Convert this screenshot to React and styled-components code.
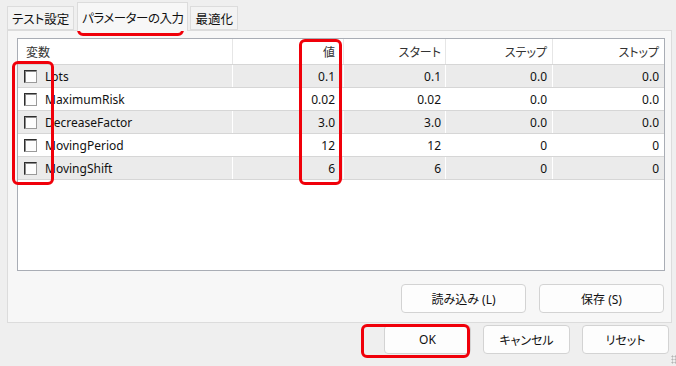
import React from 'react';
import styled, { createGlobalStyle } from 'styled-components';

const GlobalStyle = createGlobalStyle`
  html, body {
    margin: 0;
    padding: 0;
    background: #efefef;
  }
  body {
    font-family: "Noto Sans", "Noto Sans CJK JP", sans-serif;
    font-size: 12px;
    color: #111;
    font-feature-settings: "palt";
  }
`;

const Window = styled.div`
  position: relative;
  width: 676px;
  height: 366px;
  background: #efefef;
  overflow: hidden;
`;

const TabBar = styled.div`
  display: flex;
  align-items: flex-end;
  height: 30px;
  padding-left: 7px;
`;

const Tab = styled.div`
  display: flex;
  align-items: center;
  height: ${p => (p.active ? '28px' : '22px')};
  padding: 0 ${p => (p.active ? '4px' : '4px')};
  margin-right: ${p => (p.active ? '2px' : '3px')};
  margin-bottom: ${p => (p.active ? '-1px' : '0')};
  background: ${p => (p.active ? '#f7f7f7' : '#f3f3f3')};
  border: 1px solid #dcdcdc;
  border-bottom: ${p => (p.active ? 'none' : '1px solid #dcdcdc')};
  font-family: "Noto Sans CJK JP", sans-serif;
  font-size: 12.5px;
  letter-spacing: ${p => (p.active ? '-0.5px' : '0')};
  color: #111;
  z-index: ${p => (p.active ? 1 : 0)};
`;

const Panel = styled.div`
  display: flex;
  flex-direction: column;
  width: 665px;
  height: 293px;
  margin-left: 7px;
  box-sizing: border-box;
  background: #f7f7f7;
  border: 1px solid #dcdcdc;
  padding: 7px 7px 0 9px;
`;

const Table = styled.div`
  width: 648px;
  height: 233px;
  box-sizing: border-box;
  background: #fff;
  border: 1px solid #a9adb5;
`;

const Row = styled.div`
  display: grid;
  grid-template-columns: 215px 111px 102px 107px 111px;
  height: ${p => (p.header ? '25px' : '22px')};
  background: ${p => (p.shaded ? '#ebebeb' : '#fff')};
  border-bottom: 1px solid #d6d6d6;
`;

const Cell = styled.div`
  display: flex;
  align-items: center;
  justify-content: ${p => (p.left ? 'flex-start' : 'flex-end')};
  padding: ${p => (p.left ? '0 0 0 5px' : `0 ${p.pr || 5}px 0 0`)};
  border-right: 1px solid ${p => (p.header ? '#e6e6e6' : '#ffffff')};
  white-space: nowrap;
  color: #111;
  font-size: 12px;
  &:last-child {
    border-right: none;
  }
`;

const HeadText = styled.span`
  font-family: "Noto Sans CJK JP", sans-serif;
  font-size: 12px;
  color: #333;
  padding-left: ${p => (p.pl || 0)}px;
`;

const Check = styled.span`
  display: inline-block;
  width: 13px;
  height: 13px;
  box-sizing: border-box;
  margin: 0 8px 0 1px;
  background: #fdfdfd;
  border: 1px solid;
  border-color: #2e2e2e #9a9a9a #9a9a9a #2e2e2e;
  box-shadow: inset 1px 1px 0 #8a8a8a;
`;

const ButtonRow = styled.div`
  display: flex;
  justify-content: flex-end;
  gap: 13px;
  margin-top: 13px;
`;

const Button = styled.button`
  width: ${p => p.w || 87}px;
  height: 29px;
  box-sizing: border-box;
  background: #fdfdfd;
  border: 1px solid #d3d3d3;
  border-radius: 4px;
  font-family: "Noto Sans", "Noto Sans CJK JP", sans-serif;
  font-feature-settings: "palt";
  font-size: 12px;
  color: #111;
  padding: 0;
`;

const Footer = styled.div`
  display: flex;
  justify-content: flex-end;
  gap: 12px;
  padding: 2px 7px 0 0;
`;

const Mark = styled.div`
  position: absolute;
  box-sizing: border-box;
  border: 3px solid #f0000a;
  border-radius: 6px;
  pointer-events: none;
`;

const Grip = styled.div`
  position: absolute;
  right: 0;
  bottom: 2px;
  width: 5px;
  height: 9px;
  background-image: radial-gradient(#b5b5b5 45%, transparent 50%);
  background-size: 3px 3px;
`;

const params = [
  { name: 'Lots', value: '0.1', start: '0.1', step: '0.0', stop: '0.0' },
  { name: 'MaximumRisk', value: '0.02', start: '0.02', step: '0.0', stop: '0.0' },
  { name: 'DecreaseFactor', value: '3.0', start: '3.0', step: '0.0', stop: '0.0' },
  { name: 'MovingPeriod', value: '12', start: '12', step: '0', stop: '0' },
  { name: 'MovingShift', value: '6', start: '6', step: '0', stop: '0' },
];

export default function App() {
  return (
    <Window>
      <GlobalStyle />
      <TabBar>
        <Tab>テスト設定</Tab>
        <Tab active>パラメーターの入力</Tab>
        <Tab>最適化</Tab>
      </TabBar>
      <Panel>
        <Table>
          <Row header>
            <Cell left header><HeadText pl={3}>変数</HeadText></Cell>
            <Cell header pr={8}><HeadText>値</HeadText></Cell>
            <Cell header pr={4}><HeadText>スタート</HeadText></Cell>
            <Cell header><HeadText>ステップ</HeadText></Cell>
            <Cell header><HeadText>ストップ</HeadText></Cell>
          </Row>
          {params.map((p, i) => (
            <Row key={p.name} shaded={i % 2 === 0}>
              <Cell left><Check />{p.name}</Cell>
              <Cell pr={8}>{p.value}</Cell>
              <Cell pr={4}>{p.start}</Cell>
              <Cell>{p.step}</Cell>
              <Cell>{p.stop}</Cell>
            </Row>
          ))}
        </Table>
        <ButtonRow>
          <Button w={125}>読み込み (L)</Button>
          <Button w={125}>保存 (S)</Button>
        </ButtonRow>
      </Panel>
      <Footer>
        <Button>OK</Button>
        <Button>キャンセル</Button>
        <Button>リセット</Button>
      </Footer>
      <Mark style={{ left: 77, top: 3, width: 107, height: 33 }} />
      <Mark style={{ left: 12, top: 61, width: 42, height: 124 }} />
      <Mark style={{ left: 299, top: 39, width: 43, height: 146 }} />
      <Mark style={{ left: 361, top: 324, width: 109, height: 34 }} />
      <Grip />
    </Window>
  );
}
